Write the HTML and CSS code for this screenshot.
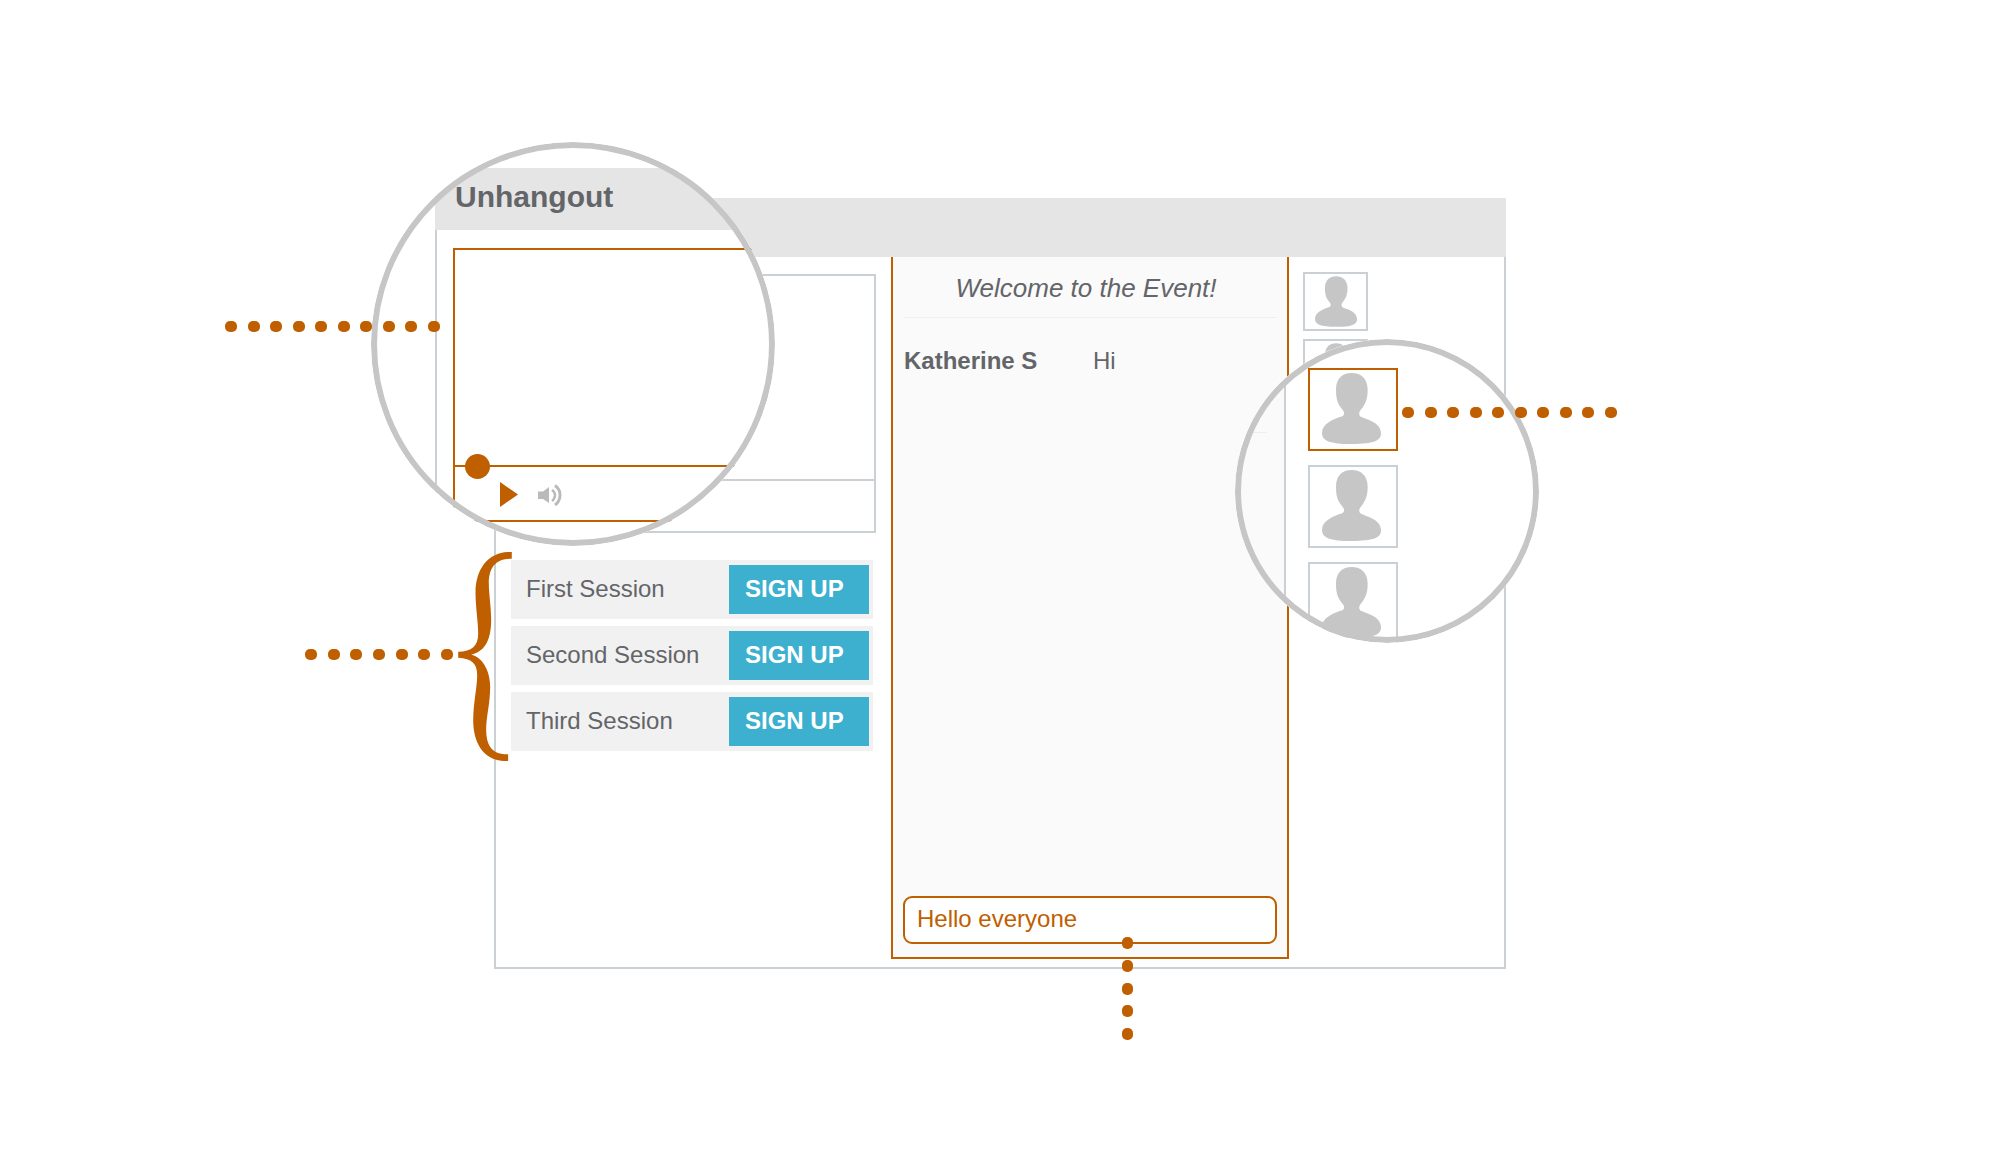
FILE: index.html
```html
<!DOCTYPE html>
<html lang="en">
<head>
<meta charset="utf-8">
<meta name="viewport" content="width=device-width, initial-scale=1">
<title>Unhangout</title>
<link rel="stylesheet" href="styles.css">
</head>
<body>
<svg class="symbols" aria-hidden="true">
  <symbol id="person" viewBox="0 0 177 213">
    <path d="M89 0C117 0 137 17 137 50C137 79 130 92 119 107C109 118 110 127 118 132C143 142 177 151 177 181C177 204 155 213 89 213C23 213 0 203 0 179C0 153 34 138 61 130C69 124 68 117 59 107C47 91 42 79 42 50C42 17 61 0 89 0Z"/>
  </symbol>
</svg>

<main class="page">
  <div class="mockup">
    <section class="window">
      <header class="window-bar"></header>
      <div class="window-body">
        <div class="left">
          <div class="video"><div class="video-screen"></div></div>
          <ul class="sessions">
            <li class="session"><span>First Session</span><button class="signup" type="button">SIGN UP</button></li>
            <li class="session"><span>Second Session</span><button class="signup" type="button">SIGN UP</button></li>
            <li class="session"><span>Third Session</span><button class="signup" type="button">SIGN UP</button></li>
          </ul>
        </div>
        <section class="chat">
          <h2 class="chat-title">Welcome to the Event!</h2>
          <p class="message"><b class="author">Katherine S</b><span>Hi</span></p>
          <input class="chat-input" type="text" value="Hello everyone" aria-label="Message">
        </section>
        <aside class="people">
          <div class="avatar"><svg class="face"><use href="#person"/></svg></div>
          <div class="avatar"><svg class="face"><use href="#person"/></svg></div>
        </aside>
      </div>
    </section>

    <section class="lens lens-video">
      <h1 class="brand"><span class="brand-name">Unhangout</span></h1>
      <div class="lens-pane">
        <div class="player">
          <div class="player-screen"></div>
          <div class="controls">
            <input class="seek" type="range" min="0" max="100" value="0" aria-label="Seek">
            <button class="control" type="button" aria-label="Play">
              <svg width="18" height="25" viewBox="0 0 18 25"><path d="M0 0L18 12.5L0 25Z" fill="#bf5f00"/></svg>
            </button>
            <button class="control" type="button" aria-label="Volume">
              <svg width="24" height="22" viewBox="0 0 24 22" fill="none" stroke="#bababa">
                <path d="M0 7.500H5L11 3V19L5 15H0Z" fill="#bababa" stroke="none"/>
                <path d="M14 6Q17 8 17 11Q17 14.500 14 17" stroke-width="2.500"/>
                <path d="M17 1.500Q22 5 22 11Q22 17.500 17 21" stroke-width="3"/>
              </svg>
            </button>
          </div>
        </div>
      </div>
    </section>

    <section class="lens lens-people">
      <div class="strip"><div class="strip-rule"></div></div>
      <div class="roster">
        <div class="avatar large selected"><svg class="face"><use href="#person"/></svg></div>
        <div class="avatar large"><svg class="face"><use href="#person"/></svg></div>
        <div class="avatar large"><svg class="face"><use href="#person"/></svg></div>
      </div>
    </section>

    <svg class="brace" viewBox="504 35 161 628" aria-hidden="true">
      <path d="M665 35C598 32 556 82 556 158C556 200 564 245 564 280C564 318 545 334 504 335V353C545 356 561 370 561 405C561 440 549 490 549 540C549 615 585 667 654 663V643C612 644 588 625 588 567C588 530 600 490 600 440C600 390 575 350 543 344C585 333 603 300 603 238C603 200 596 160 596 130C596 80 618 54 665 55Z"/>
    </svg>

    <div class="dots dots-video"><i></i><i></i><i></i><i></i><i></i><i></i><i></i><i></i><i></i><i></i></div>
    <div class="dots dots-sessions"><i></i><i></i><i></i><i></i><i></i><i></i><i></i></div>
    <div class="dots dots-people"><i></i><i></i><i></i><i></i><i></i><i></i><i></i><i></i><i></i><i></i></div>
    <div class="dots dots-chat"><i></i><i></i><i></i><i></i><i></i></div>
  </div>
</main>
</body>
</html>
```
FILE: styles.css
```css
:root {
  --accent: #bf5f00;
  --line: #cbd0d5;
  --ring: #c6c6c6;
  --bar: #e5e5e5;
  --panel: #fafafa;
  --text: #636569;
}

* { box-sizing: border-box; }

body {
  margin: 0;
  background: #fff;
  color: var(--text);
  font: 24px/30px "Liberation Sans", Arial, sans-serif;
}

.symbols { position: absolute; width: 0; height: 0; }

.page { padding: 198px 24px; }

.mockup {
  position: relative;
  max-width: 1012px;
  margin: 0 auto;
}

/* Event window */
.window-bar { height: 59px; background: var(--bar); }

.window-body {
  display: grid;
  grid-template-columns: 395px 1fr 215px;
  border: 2px solid var(--line);
  border-top: 0;
}

.left { padding: 17px 15px 0 14px; }

.video { border: 2px solid var(--line); padding-bottom: 50px; }
.video-screen { height: 205px; border-bottom: 2px solid var(--line); }

.sessions {
  display: grid;
  gap: 7px;
  margin: 27px 3px 0 1px;
  padding: 0;
  list-style: none;
}

.session {
  display: flex;
  justify-content: space-between;
  height: 59px;
  padding: 5px 4px 5px 15px;
  background: #f1f1f1;
  line-height: 47px;
}

.signup {
  width: 140px;
  padding: 0 0 2px 16px;
  border: 0;
  background: #3cb0ce;
  color: #fff;
  font: bold 24px/30px "Liberation Sans", Arial, sans-serif;
  text-align: left;
}

.chat {
  display: flex;
  flex-direction: column;
  min-height: 702px;
  margin-bottom: 8px;
  padding: 0 10px 13px;
  border: 2px solid var(--accent);
  border-top: 0;
  background: var(--panel);
}

.chat-title {
  margin: 0;
  padding: 2px 8px 0 0;
  border-bottom: 1px solid #efefef;
  font-size: 26px;
  font-style: italic;
  font-weight: normal;
  line-height: 58px;
  text-align: center;
}

.message { display: flex; margin: 28px 0 auto 1px; }
.author { width: 189px; }

.chat-input {
  width: 100%;
  height: 48px;
  padding: 0 12px 3px;
  border: 2px solid var(--accent);
  border-radius: 9px;
  background: #fff;
  color: var(--accent);
  font: inherit;
}

.people {
  display: flex;
  flex-direction: column;
  gap: 8px;
  padding: 15px 0 0 14px;
}

.avatar {
  display: flex;
  justify-content: center;
  width: 65px;
  height: 59px;
  padding-top: 2px;
  border: 2px solid var(--line);
  background: #fff;
}

.face { width: 42px; height: 51px; fill: var(--ring); }

.large { width: 90px; height: 83px; padding: 3px 3px 0 0; }
.large .face { width: 59px; height: 71px; }
.selected { position: relative; z-index: 2; border-color: var(--accent); }

/* Magnifying lenses lie over the window */
.lens {
  position: absolute;
  overflow: hidden;
  border-radius: 50%;
  background: #fff;
}

.lens::after {
  content: "";
  position: absolute;
  inset: 0;
  z-index: 1;
  border: 6px solid var(--ring);
  border-radius: 50%;
}

.lens-video {
  top: -56px;
  left: -123px;
  width: 404px;
  height: 404px;
  padding: 26px 0 0 64px;
}

.brand {
  margin: 0;
  padding: 0 0 5px 20px;
  background: var(--bar);
  font-size: 30px;
  line-height: 57px;
}

/* the lettering sits above the ring, its bar below */
.brand-name { position: relative; z-index: 2; }

.lens-pane {
  height: 100%;
  padding: 18px 0 0 16px;
  border-left: 2px solid var(--line);
}

/* the right edge runs on past the lens */
.player { margin-right: -20px; border: 2px solid var(--accent); }
.player-screen { height: 215px; }

.controls {
  position: relative;
  display: flex;
  align-items: center;
  gap: 20px;
  height: 55px;
  padding: 2px 0 0 45px;
  border-top: 2px solid var(--accent);
}

.control { padding: 0; border: 0; background: none; }
.control svg { display: block; }

.seek {
  position: absolute;
  top: -13px;
  left: 10px;
  width: 250px;
  height: 25px;
  margin: 0;
  background: none;
  appearance: none;
}

.seek::-webkit-slider-thumb {
  width: 25px;
  height: 25px;
  border-radius: 50%;
  background: var(--accent);
  appearance: none;
}

.lens-people {
  top: 141px;
  right: -33px;
  display: flex;
  width: 304px;
  height: 304px;
}

.strip {
  width: 51px;
  padding-top: 93px;
  border-right: 2px solid var(--line);
  background: var(--panel);
}

.strip-rule { width: 32px; border-top: 1px solid #efefef; }

.roster {
  display: flex;
  flex-direction: column;
  flex-shrink: 0;
  gap: 14px;
  padding: 29px 0 0 22px;
}

.roster .avatar { flex-shrink: 0; }

/* Callouts */
.brace {
  position: absolute;
  top: 354px;
  left: -36px;
  width: 54px;
  height: 209px;
  fill: var(--accent);
}

.dots {
  position: absolute;
  z-index: 3;
  display: flex;
  justify-content: space-between;
}

.dots i {
  width: 12px;
  height: 11px;
  border-radius: 5px;
  background: var(--accent);
}

.dots-video { top: 123px; left: -269px; width: 215px; }
.dots-sessions { top: 451px; left: -189px; width: 148px; }
.dots-people { top: 209px; right: -111px; width: 215px; }
.dots-chat { top: 739px; right: 373px; flex-direction: column; height: 103px; }
.dots-chat i { width: 11px; height: 12px; }
```
